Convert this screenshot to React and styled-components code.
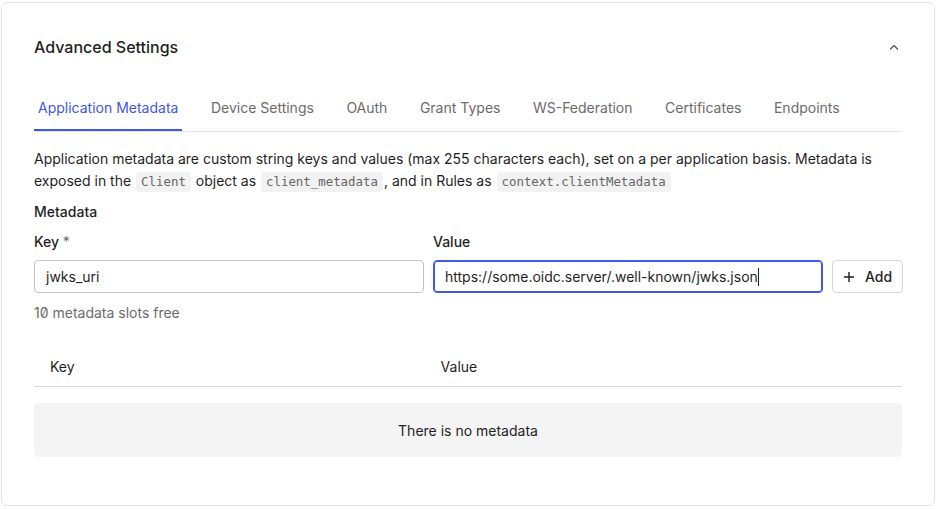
import React from 'react';
import styled, { createGlobalStyle } from 'styled-components';

const GlobalStyle = createGlobalStyle`
  * { box-sizing: border-box; }
  body {
    margin: 0;
    background: #ffffff;
    font-family: Inter, "Noto Sans", sans-serif;
    color: #1f1f1f;
    font-size: 14px;
    font-feature-settings: "zero" 1;
  }
`;

const tabs = [
  'Application Metadata',
  'Device Settings',
  'OAuth',
  'Grant Types',
  'WS-Federation',
  'Certificates',
  'Endpoints',
];

const App = () => {
  return (
    <>
      <GlobalStyle />
      <Card>
        <Header>
          <Title>Advanced Settings</Title>
          <svg width="16" height="16" viewBox="0 0 16 16">
            <path d="M4.5 10 L8 6.5 L11.5 10" fill="none" stroke="#555" strokeWidth="1.3" strokeLinecap="round" strokeLinejoin="round" />
          </svg>
        </Header>

        <TabList>
          {tabs.map((t, i) => (
            <Tab key={t} active={i === 0}>{t}</Tab>
          ))}
        </TabList>

        <Description>
          Application metadata are custom string keys and values (max 255 characters each), set on a per application basis. Metadata is
          exposed in the <Code>Client</Code> object as <Code>client_metadata</Code>, and in Rules as <Code>context.clientMetadata</Code>
        </Description>

        <SectionLabel>Metadata</SectionLabel>

        <FormGrid>
          <FieldLabel>Key <Required>*</Required></FieldLabel>
          <FieldLabel>Value</FieldLabel>
          <span />
          <Field>jwks_uri</Field>
          <Field focused>
            https://some.oidc.server/.well-known/jwks.json<Caret />
          </Field>
          <AddButton>
            <svg width="12" height="12" viewBox="0 0 12 12">
              <path d="M6 1 V11 M1 6 H11" stroke="#1f1f1f" strokeWidth="1.4" />
            </svg>
            Add
          </AddButton>
        </FormGrid>

        <Hint>10 metadata slots free</Hint>

        <TableHead>
          <HeadCell>Key</HeadCell>
          <HeadCell>Value</HeadCell>
        </TableHead>

        <Empty>There is no metadata</Empty>
      </Card>
    </>
  );
};

export default App;

const Card = styled.div`
  margin: 2px 2px 0 1px;
  height: 504px;
  border: 1px solid #e3e3e3;
  border-radius: 6px;
  padding: 28px 32px 0 32px;
`;

const Header = styled.div`
  display: flex;
  align-items: center;
  justify-content: space-between;
  height: 32px;
`;

const Title = styled.h2`
  margin: 0;
  font-size: 16px;
  font-weight: 500;
  color: #1f1f1f;
`;

const TabList = styled.div`
  display: flex;
  gap: 24.5px;
  margin-top: 20px;
  border-bottom: 1px solid #e3e3e3;
`;

const Tab = styled.div`
  height: 48px;
  padding: 0 4px;
  display: flex;
  align-items: center;
  font-size: 14px;
  color: ${p => (p.active ? '#3f59e4' : '#6b6b6b')};
  box-shadow: ${p => (p.active ? 'inset 0 -2px 0 #3f59e4' : 'none')};
`;

const Description = styled.p`
  margin: 16px 0 0;
  font-size: 14px;
  line-height: 22px;
  color: #1f1f1f;
`;

const Code = styled.code`
  display: inline-block;
  font-family: "DejaVu Sans Mono", "Liberation Mono", monospace;
  font-size: 12.4px;
  line-height: 20px;
  background: #f2f2f2;
  color: #666;
  padding: 0 5px;
  margin: 0 1px;
  border-radius: 4px;
`;

const SectionLabel = styled.div`
  margin-top: 9px;
  line-height: 22px;
  font-weight: 500;
`;

const FormGrid = styled.div`
  display: grid;
  grid-template-columns: 390px 390px 71px;
  column-gap: 9px;
  row-gap: 8px;
  margin-top: 9px;
`;

const FieldLabel = styled.div`
  line-height: 20px;
  font-weight: 500;
`;

const Required = styled.span`
  color: #6b6b6b;
  font-weight: 400;
`;

const Field = styled.div`
  height: 33px;
  border: 1px solid #c4c4c4;
  border-radius: 4px;
  padding: 0 11px;
  display: flex;
  align-items: center;
  white-space: nowrap;
  overflow: hidden;
  color: #1f1f1f;
  ${p => p.focused && `
    border-color: #3f59e4;
    box-shadow: inset 0 0 0 1px #3f59e4;
  `}
`;

const Caret = styled.span`
  display: inline-block;
  width: 1px;
  height: 18px;
  background: #1f1f1f;
`;

const AddButton = styled.button`
  height: 33px;
  border: 1px solid #d6d6d6;
  border-radius: 4px;
  background: #fff;
  display: flex;
  align-items: center;
  justify-content: center;
  gap: 10px;
  font-family: inherit;
  font-size: 14px;
  font-weight: 500;
  color: #1f1f1f;
  padding: 0;
`;

const Hint = styled.div`
  margin-top: 10px;
  line-height: 20px;
  color: #6b6b6b;
`;

const TableHead = styled.div`
  display: grid;
  grid-template-columns: 45% 55%;
  height: 41px;
  margin-top: 23px;
  border-bottom: 1px solid #d9d9d9;
  align-items: center;
`;

const HeadCell = styled.div`
  padding: 0 16px;
  font-weight: 400;
`;

const Empty = styled.div`
  margin-top: 16px;
  height: 54px;
  background: #f4f4f4;
  border-radius: 4px;
  display: flex;
  align-items: center;
  justify-content: center;
  color: #1f1f1f;
`;
